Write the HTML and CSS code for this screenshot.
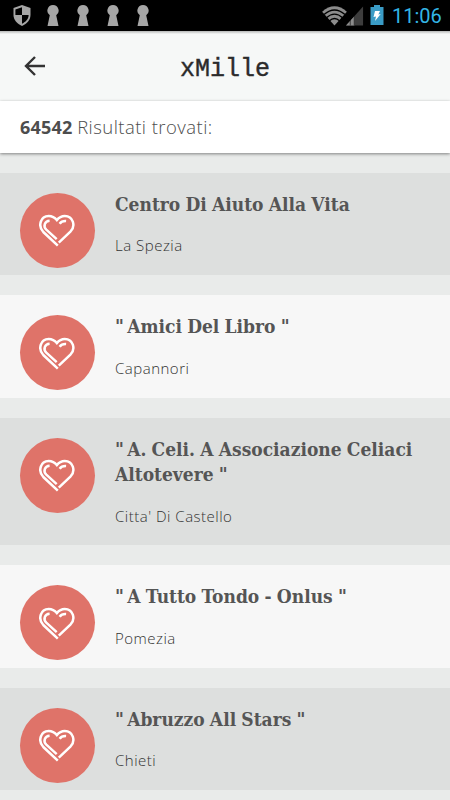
FILE: index.html
```
<!DOCTYPE html>
<html lang="it">
<head>
    <meta charset="UTF-8">
    <meta name="viewport" content="width=device-width, initial-scale=1.0">
    <title>xMille</title>
    <link rel="stylesheet" href="styles.css">
</head>
<body>
    <svg width="0" height="0" class="defs">
        <symbol id="heart" viewBox="0 0 36 34">
            <path d="M18.800 31.700 4.300 18C-1.400 12 1.500 2 9.700 2c3.500 0 6 1.400 8.100 4.100C20 3.400 22.400 2 25.800 2c8.200 0 11.300 9.900 5.600 15.700L19.800 28.600"/>
            <path d="M10.600 6.700C5.500 6.900 4 12.500 7.300 15.700L17.700 25.200"/>
            <path d="M20.600 9.700c1.500-2.100 3.200-2.900 6.500-2.700"/>
        </symbol>
        <symbol id="keyhole" viewBox="0 0 14 22">
            <path d="M7 0a5.600 5.600 0 0 1 3.200 10.200L12.500 21h-11L3.800 10.200A5.600 5.600 0 0 1 7 0z"/>
        </symbol>
    </svg>

    <div class="status-bar">
        <div class="notifications">
            <svg class="shield" width="18" height="21" viewBox="0 0 18 21">
                <path d="M9 0 17.500 3v7c0 5-3.500 8.800-8.500 11C4 18.800.5 15 .5 10V3z" fill="#a6a6a6"/>
                <path d="M9 2.300V10H2.400V4.500zM9 10h6.600c0 3.800-2.600 6.800-6.600 8.800z" fill="#000"/>
            </svg>
            <svg width="14" height="22"><use href="#keyhole"/></svg>
            <svg width="14" height="22"><use href="#keyhole"/></svg>
            <svg width="14" height="22"><use href="#keyhole"/></svg>
            <svg width="14" height="22"><use href="#keyhole"/></svg>
        </div>
        <div class="system">
            <svg class="wifi" width="25" height="20" viewBox="0 0 26 21">
                <path d="M0 6Q13-5.500 26 6L13 20.500z" fill="#8c8c8c"/>
                <path d="M2 9Q13-.5 24 9M4.500 12.300q8.500-7.600 17 0M7.500 15.700q5.500-5 11 0" fill="none" stroke="#000" stroke-width="1.400"/>
            </svg>
            <svg width="18" height="20" viewBox="0 0 19 20">
                <path d="M18 0v20H0z" fill="#3d3d3d"/>
                <path d="M9 10v10H0z" fill="#8c8c8c"/>
                <path d="M4.500 14v6M8.700 10v10" stroke="#000" stroke-width=".6"/>
            </svg>
            <svg class="battery" width="14" height="20" viewBox="0 0 14 20">
                <path d="M4 0h6v2h3.500v18H.5V2H4z" fill="#3a9cc6"/>
                <path d="M5 6h5L8.300 9.500l2.400-.5L5 16l1-4.500-2.500.5z" fill="#fff"/>
            </svg>
            <span class="clock">11:06</span>
        </div>
    </div>

    <header class="header">
        <svg class="back" width="22" height="22" viewBox="0 0 22 22">
            <path d="M11 2 2 11l9 9M2 11h19"/>
        </svg>
        <h1>xMille</h1>
    </header>

    <div class="results"><b>64542</b> <span>Risultati trovati:</span></div>

    <main class="list">
        <div class="item">
            <div class="icon"><svg width="36" height="34"><use href="#heart"/></svg></div>
            <div class="text">
                <h2>Centro Di Aiuto Alla Vita</h2>
                <p>La Spezia</p>
            </div>
        </div>
        <div class="item">
            <div class="icon"><svg width="36" height="34"><use href="#heart"/></svg></div>
            <div class="text">
                <h2><span class="quote">"</span> Amici Del Libro <span class="quote">"</span></h2>
                <p>Capannori</p>
            </div>
        </div>
        <div class="item">
            <div class="icon"><svg width="36" height="34"><use href="#heart"/></svg></div>
            <div class="text">
                <h2><span class="quote">"</span> A. Celi. A Associazione Celiaci<br>Altotevere <span class="quote">"</span></h2>
                <p>Citta' Di Castello</p>
            </div>
        </div>
        <div class="item">
            <div class="icon"><svg width="36" height="34"><use href="#heart"/></svg></div>
            <div class="text">
                <h2><span class="quote">"</span> A Tutto Tondo - Onlus <span class="quote">"</span></h2>
                <p>Pomezia</p>
            </div>
        </div>
        <div class="item">
            <div class="icon"><svg width="36" height="34"><use href="#heart"/></svg></div>
            <div class="text">
                <h2><span class="quote">"</span> Abruzzo All Stars <span class="quote">"</span></h2>
                <p>Chieti</p>
            </div>
        </div>
    </main>
</body>
</html>
```
FILE: styles.css
```
* {
    box-sizing: border-box;
}

body {
    margin: 0;
    height: 800px;
    overflow: hidden;
    background-color: #e9ebea;
    font-family: "Open Sans", "Noto Sans", sans-serif;
    color: #4d4d4d;
}

h1, h2, p {
    margin: 0;
}

.defs {
    display: none;
}

.status-bar {
    display: flex;
    justify-content: space-between;
    height: 31px;
    padding: 5px 7px 0 13px;
    background: #000;
}

.notifications {
    display: flex;
    gap: 16px;
    fill: #a6a6a6;
}

.shield {
    margin-right: -1px;
}

.system {
    display: flex;
}

.system svg {
    margin-top: 1px;
}

.system .wifi {
    margin-right: -1px;
}

.system .battery {
    margin: 0 8px 0 6px;
}

.clock {
    width: 51px;
    font: 20px/22px Roboto, sans-serif;
    color: #33b5e5;
    white-space: nowrap;
}

.header {
    display: grid;
    grid-template-columns: 1fr auto 1fr;
    align-items: center;
    height: 70px;
    padding: 0 24px;
    background: linear-gradient(#b5b7b6, #f6f8f7 3px);
}

.back {
    fill: none;
    stroke: #333;
    stroke-width: 2.4;
}

.header h1 {
    padding-top: 7px;
    font: 25px/30px "Liberation Mono", monospace;
    color: #2b2b2b;
    -webkit-text-stroke: 0.4px #2b2b2b;
}

.results {
    position: relative;
    height: 52px;
    padding-left: 20px;
    background: #fff;
    font-size: 18px;
    line-height: 52px;
    box-shadow: 0 1px 3px rgba(0, 0, 0, 0.45);
}

.results b {
    letter-spacing: 0.2px;
}

.results span {
    font-size: 18.5px;
    font-weight: 350;
    letter-spacing: 0.45px;
}

.list {
    display: flex;
    flex-direction: column;
    gap: 20px;
    padding-top: 19.5px;
}

.item {
    display: flex;
    gap: 20px;
    padding: 20px 20px 7.5px;
    background: #dddfde;
}

.item:nth-child(even) {
    background: #f7f7f7;
}

.icon {
    display: flex;
    flex: none;
    align-items: center;
    justify-content: center;
    width: 75px;
    height: 75px;
    padding: 2px 1px 0 0;
    border-radius: 50%;
    background: #df7369;
}

.icon svg {
    fill: none;
    stroke: #fff;
    stroke-width: 2.5;
}

.text {
    margin-top: -1px;
}

.text h2 {
    font: bold 19px/25.5px "DejaVu Serif Condensed", "DejaVu Serif", serif;
    word-spacing: -0.7px;
    color: #555;
    white-space: nowrap;
}

.quote {
    letter-spacing: -2px;
}

.text p {
    margin: 18px 0 12px;
    font-size: 15px;
    font-weight: 300;
    letter-spacing: 0.5px;
    line-height: 20px;
    color: #333;
}
```
